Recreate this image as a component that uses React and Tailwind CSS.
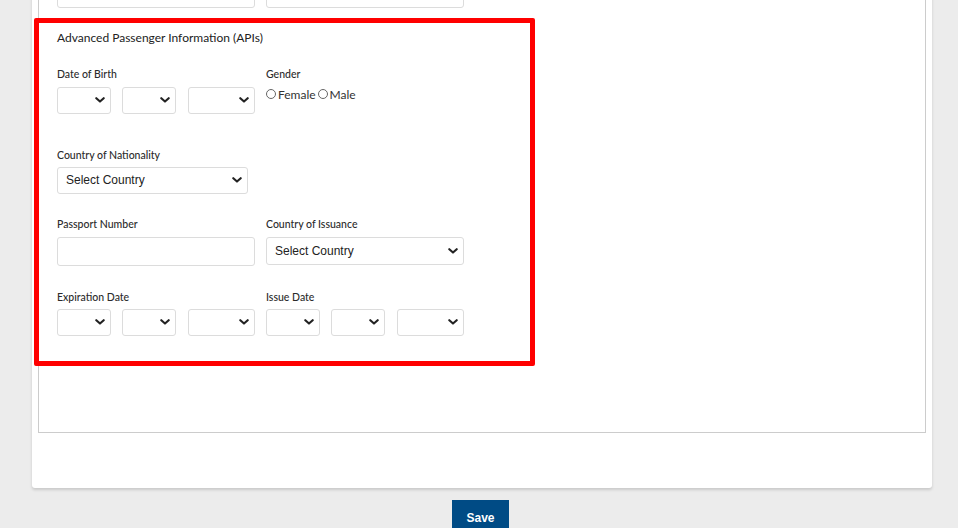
import React from 'react';

const Chevron = () => (
  <svg
    className="pointer-events-none absolute right-[6px] top-1/2 -translate-y-1/2"
    width="10"
    height="6"
    viewBox="0 0 10 6"
    fill="none"
  >
    <path d="M1.3 1.2 L5 4.6 L8.7 1.2" stroke="#222" strokeWidth="2.1" strokeLinecap="round" strokeLinejoin="round" />
  </svg>
);

const Select = ({ w, h = 'h-[27px]', placeholder = '' }) => (
  <div className={`relative ${w} ${h}`}>
    <select className="h-full w-full appearance-none rounded-[3px] border border-[#dcdcdc] bg-white pl-[8px] pr-6 text-[12px] text-[#222] font-['Liberation_Sans',Arial,sans-serif] outline-none">
      <option>{placeholder}</option>
    </select>
    <Chevron />
  </div>
);

const DateSet = () => (
  <div className="flex">
    <Select w="w-[54px]" />
    <div className="ml-[11px]">
      <Select w="w-[54px]" />
    </div>
    <div className="ml-[12px]">
      <Select w="w-[67px]" />
    </div>
  </div>
);

const Label = ({ children }) => (
  <div className="text-[10.5px] leading-[14px] text-[#2b2b2b] font-medium">{children}</div>
);

const Radio = ({ label }) => (
  <label className="flex items-center">
    <span className="inline-block h-[10px] w-[10px] rounded-full border border-[#666] bg-white -translate-y-[1px]"></span>
    <span className="ml-[2px] text-[12px] text-[#333]">{label}</span>
  </label>
);

export default function App() {
  return (
    <div className="relative min-h-[528px] overflow-hidden bg-[#ececec] font-['Lato','Noto_Sans',sans-serif]">
      <div className="-mt-[40px] ml-[32px] w-[900px] rounded-b-[3px] bg-white pl-[6px] pr-[6px] pt-[10px] pb-[55px] shadow-[0_2px_3px_rgba(0,0,0,0.15)]">
        <div className="h-[463px] border border-[#cccccc] pl-[18px] pt-[9px]">
          <div className="flex gap-[11px]">
            <div className="h-[28px] w-[198px] rounded-[3px] border border-[#dcdcdc]"></div>
            <div className="h-[28px] w-[198px] rounded-[3px] border border-[#dcdcdc]"></div>
          </div>

          <div className="mt-[22px] text-[12px] leading-[16px] text-[#222]">Advanced Passenger Information (APIs)</div>

          <div className="mt-[21px] flex gap-[11px]">
            <div className="w-[198px]">
              <Label>Date of Birth</Label>
              <div className="mt-[5px]">
                <DateSet />
              </div>
            </div>
            <div className="w-[198px]">
              <Label>Gender</Label>
              <div className="mt-[5px] flex gap-[2px]">
                <Radio label="Female" />
                <Radio label="Male" />
              </div>
            </div>
          </div>

          <div className="mt-[35px]">
            <Label>Country of Nationality</Label>
            <div className="mt-[4px]">
              <Select w="w-[191px]" placeholder="Select Country" />
            </div>
          </div>

          <div className="mt-[24px] flex gap-[11px]">
            <div className="w-[198px]">
              <Label>Passport Number</Label>
              <div className="mt-[6px] h-[29px] w-[198px] rounded-[3px] border border-[#dcdcdc]"></div>
            </div>
            <div className="w-[198px]">
              <Label>Country of Issuance</Label>
              <div className="mt-[6px]">
                <Select w="w-[198px]" h="h-[28px]" placeholder="Select Country" />
              </div>
            </div>
          </div>

          <div className="mt-[24px] flex gap-[11px]">
            <div className="w-[198px]">
              <Label>Expiration Date</Label>
              <div className="mt-[4px]">
                <DateSet />
              </div>
            </div>
            <div className="w-[198px]">
              <Label>Issue Date</Label>
              <div className="mt-[4px]">
                <DateSet />
              </div>
            </div>
          </div>
        </div>
      </div>

      <div className="mt-[12px] flex justify-center pl-[3px]">
        <button className="h-[36px] w-[57px] bg-[#004b85] text-[12px] font-bold text-white font-['Liberation_Sans_Narrow','Liberation_Sans',sans-serif]">
          Save
        </button>
      </div>

      <div className="pointer-events-none absolute left-[34px] top-[18px] h-[348px] w-[501px] rounded-[2px] border-[5px] border-[#ff0000]"></div>
    </div>
  );
}
